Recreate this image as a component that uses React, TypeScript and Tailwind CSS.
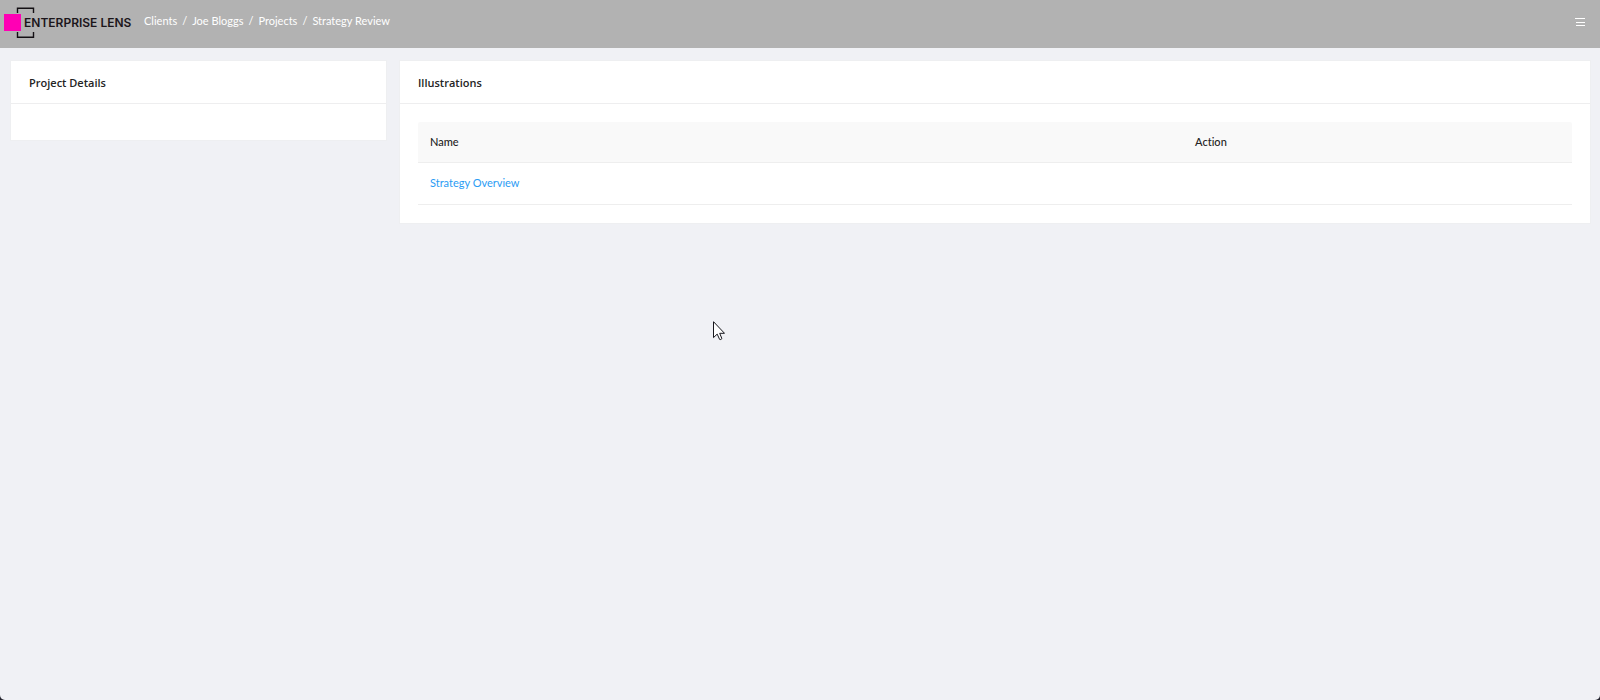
import type { ReactNode } from "react";

const crumbs = ["Clients", "Joe Bloggs", "Projects", "Strategy Review"];
const illustrations = [{ name: "Strategy Overview", action: "" }];

function Logo() {
  return (
    <a href="#" aria-label="Enterprise Lens" className="flex items-center">
      <svg viewBox="0 0 132 32" className="h-8 w-[132px]" aria-hidden="true">
        <path d="M13.5 6V1.2H29.5V6M13.5 25V30.2H29.5V25" fill="none" stroke="#141014" strokeWidth="1.4" />
        <rect x="0" y="7" width="17" height="17" fill="#ff00b4" />
        <text x="20" y="20" fontSize="12" fontWeight="600" fill="#1c161b" fontFamily="Inter, sans-serif">
          ENTERPRISE LENS
        </text>
      </svg>
    </a>
  );
}

function Breadcrumb() {
  return (
    <nav aria-label="Breadcrumb">
      <ol className="flex text-white">
        {crumbs.map((label, i) => (
          <li key={label} className="flex whitespace-nowrap">
            {i > 0 && <span className="px-[5px]">/</span>}
            <a href="#">{label}</a>
          </li>
        ))}
      </ol>
    </nav>
  );
}

function Card({ title, children }: { title: string; children?: ReactNode }) {
  return (
    <section className="border border-[#eeeff1] bg-white">
      <h2 className="border-b border-[#eeeeef] px-[18px] pt-[14px] pb-3 font-['Open_Sans'] text-[11px] leading-4 font-semibold text-[#242424]">
        {title}
      </h2>
      <div className="p-[18px]">{children}</div>
    </section>
  );
}

function Cursor() {
  return (
    <svg viewBox="0 0 12 20" className="absolute top-[321px] left-[713px] h-5 w-3" aria-hidden="true">
      <path
        d="M.5 .7V16.6L4.2 13.1L6.6 18.4Q7.8 19 8.9 17.6L6.7 12.3H11.5Z"
        fill="#fff"
        stroke="#16161c"
        strokeWidth="1"
      />
    </svg>
  );
}

export default function App() {
  return (
    <div className="bg-[#24242e]">
      <div className="relative min-h-screen rounded-b-[5px] bg-[#f0f1f5] font-['Lato','Noto_Sans',sans-serif] text-[11px] leading-4 text-[#242424] [font-variant-ligatures:none]">
        <header className="flex h-12 items-start gap-2 bg-[#b2b2b2] pr-[15px] pl-1">
          <div className="pt-[7px]">
            <Logo />
          </div>
          <div className="pt-[13px]">
            <Breadcrumb />
          </div>
          <button type="button" aria-label="Menu" className="mt-[17px] ml-auto">
            <svg viewBox="0 0 10 10" className="h-[10px] w-[10px]" aria-hidden="true">
              <path d="M0 1.5H10M1 5.5H10M1 8.5H10" stroke="#fff" strokeWidth="1" />
            </svg>
          </button>
        </header>
        <main className="grid grid-cols-[377fr_1192fr] items-start gap-3 pt-3 pr-[9px] pl-[10px]">
          <Card title="Project Details" />
          <Card title="Illustrations">
            <table className="w-full table-fixed border-separate border-spacing-0 text-left">
              <thead>
                <tr className="bg-[#f9f9f9]">
                  <th className="w-[66.3%] rounded-tl-xs border-b border-[#eeeeee] px-3 py-3 font-medium">Name</th>
                  <th className="rounded-tr-xs border-b border-[#eeeeee] px-3 py-3 font-medium">Action</th>
                </tr>
              </thead>
              <tbody>
                {illustrations.map((row) => (
                  <tr key={row.name}>
                    <td className="border-b border-[#eeeeee] px-3 pt-3 pb-[13px]">
                      <a href="#" className="text-[#2b9cf4]">
                        {row.name}
                      </a>
                    </td>
                    <td className="border-b border-[#eeeeee] px-3 pt-3 pb-[13px]">{row.action}</td>
                  </tr>
                ))}
              </tbody>
            </table>
          </Card>
        </main>
        <Cursor />
      </div>
    </div>
  );
}
